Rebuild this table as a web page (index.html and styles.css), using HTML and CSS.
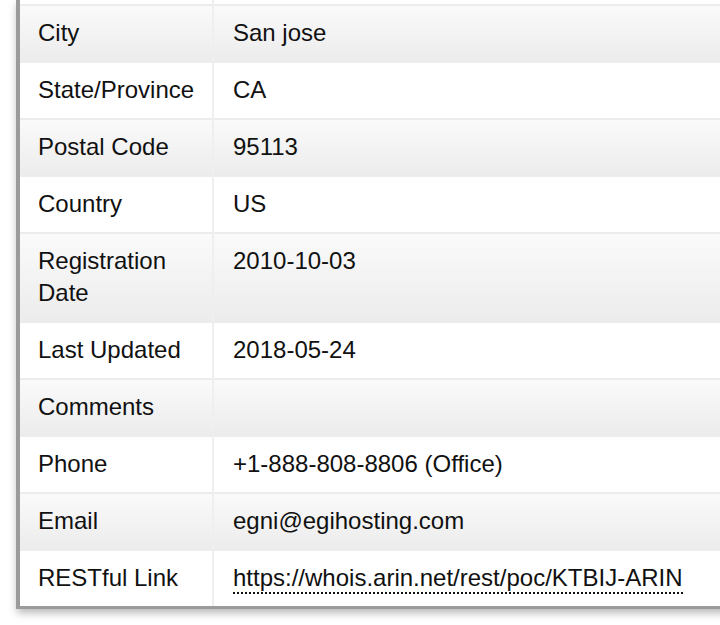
FILE: index.html
```html
<!DOCTYPE html>
<html>
<head>
<meta charset="utf-8">
<link rel="stylesheet" href="styles.css">
</head>
<body>
<div class="panel">
  <table class="info">
    <tr class="odd spacer"><td class="label"></td><td class="value"></td></tr>
    <tr class="even"><td class="label">City</td><td class="value">San jose</td></tr>
    <tr class="odd"><td class="label">State/Province</td><td class="value">CA</td></tr>
    <tr class="even"><td class="label">Postal Code</td><td class="value">95113</td></tr>
    <tr class="odd"><td class="label">Country</td><td class="value">US</td></tr>
    <tr class="even"><td class="label">Registration Date</td><td class="value">2010-10-03</td></tr>
    <tr class="odd"><td class="label">Last Updated</td><td class="value">2018-05-24</td></tr>
    <tr class="even"><td class="label">Comments</td><td class="value"></td></tr>
    <tr class="odd"><td class="label">Phone</td><td class="value">+1-888-808-8806 (Office)</td></tr>
    <tr class="even"><td class="label">Email</td><td class="value">egni@egihosting.com</td></tr>
    <tr class="odd"><td class="label">RESTful Link</td><td class="value"><a class="rest" href="#">https://whois.arin.net/rest/poc/KTBIJ-ARIN</a></td></tr>
  </table>
</div>
</body>
</html>
```

FILE: styles.css
```css
html, body {
  margin: 0;
  padding: 0;
  background: #ffffff;
  overflow: hidden;
}
body {
  width: 720px;
  height: 625px;
  font-family: "Liberation Sans", Arial, sans-serif;
  color: #111;
}
.panel {
  margin-left: 16px;
  width: 760px;
  border-left: 4px solid #9b9b9b;
  border-bottom: 3px solid #9b9b9b;
  box-shadow: 1px 4px 8px rgba(0, 0, 0, 0.28);
  background: #fff;
}
.info {
  border-collapse: collapse;
  table-layout: fixed;
  width: 100%;
  font-size: 24px;
  line-height: 32px;
}
.info td {
  border-top: 2px solid #ececec;
  padding: 11px 10px 12px 18px;
  vertical-align: top;
}
.info .label {
  width: 164px;
  padding-left: 18px;
  border-right: 2px solid #efefef;
}
.info .value {
  padding-left: 19px;
}
.info .spacer td {
  border-top: none;
  padding-top: 0;
  padding-bottom: 0;
  height: 4px;
  line-height: 4px;
}
.even td {
  background: linear-gradient(#fafafa, #ececec);
}
.odd td {
  background: #ffffff;
}
.rest {
  color: #111;
  text-decoration: none;
  border-bottom: 2px dotted #111;
  padding-bottom: 1px;
}
```
